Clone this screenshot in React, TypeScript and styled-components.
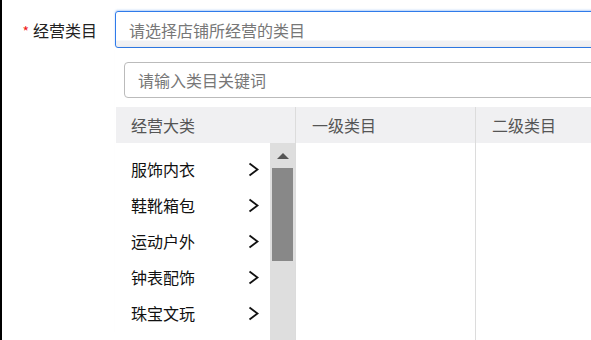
import React from "react";
import styled, { createGlobalStyle } from "styled-components";

const GlobalStyle = createGlobalStyle`
  html, body {
    margin: 0;
    padding: 0;
    background: #fff;
    overflow: hidden;
  }
  body {
    font-family: "Noto Sans CJK SC", "Noto Sans", "Liberation Sans", sans-serif;
  }
`;

const categories = ["服饰内衣", "鞋靴箱包", "运动户外", "钟表配饰", "珠宝文玩"];

const Page = styled.div`
  display: flex;
  align-items: flex-start;
  min-height: 340px;
  padding-top: 11px;
  box-sizing: border-box;
  border-left: 2px solid #000;
  overflow: hidden;
`;

const Label = styled.div`
  width: 113px;
  flex-shrink: 0;
  box-sizing: border-box;
  padding-right: 18px;
  height: 37px;
  display: flex;
  align-items: center;
  justify-content: flex-end;
  font-size: 16px;
  color: #222;
`;

const Required = styled.span`
  color: #f01818;
  font-size: 14px;
  margin-right: 4px;
  line-height: 1;
  position: relative;
  top: 1px;
`;

const Field = styled.div`
  width: 620px;
  flex-shrink: 0;
`;

const SelectBox = styled.div`
  height: 37px;
  box-sizing: border-box;
  border: 1px solid #2f7bea;
  border-radius: 3px;
  box-shadow: 0 -1px 2px rgba(47, 123, 234, 0.35);
  display: flex;
  align-items: center;
  padding-left: 13px;
  font-size: 16px;
  color: #777;
  background: linear-gradient(to bottom, #fff 0, #fff 28px, #f1f1f3 29px);
`;

const Panel = styled.div`
  position: relative;
  padding-top: 14px;
  background: #fff;
  box-shadow: 0 -3px 4px -3px rgba(0, 0, 0, 0.1);
`;

const SearchBox = styled.div`
  margin-left: 9px;
  height: 36px;
  box-sizing: border-box;
  border: 1px solid #bbb;
  border-radius: 4px;
  display: flex;
  align-items: center;
  padding-left: 13px;
  font-size: 16px;
  color: #777;
`;

const Table = styled.div`
  margin-top: 9px;
  margin-left: 1px;
`;

const Grid = styled.div`
  display: grid;
  grid-template-columns: 180px 180px 1fr;
`;

const HeadCell = styled.div<{ $first?: boolean }>`
  height: 36px;
  background: #f0f0f2;
  border-right: 1px solid #dcdcdc;
  display: flex;
  align-items: center;
  padding-left: ${(p) => (p.$first ? "15px" : "16px")};
  font-size: 16px;
  color: #555;
`;

const BodyCell = styled.div`
  height: 197px;
  border-right: 1px solid #dcdcdc;
  display: flex;
`;

const List = styled.div`
  flex: 1;
  padding-top: 8px;
`;

const Item = styled.div`
  height: 36px;
  display: flex;
  align-items: center;
  justify-content: space-between;
  padding: 0 11px 0 15px;
  font-size: 16px;
  color: #111;
`;

const ScrollTrack = styled.div`
  width: 25px;
  background: #dedede;
  display: flex;
  flex-direction: column;
  align-items: center;
`;

const UpArrow = styled.div`
  margin-top: 10px;
  width: 0;
  height: 0;
  border-left: 6px solid transparent;
  border-right: 6px solid transparent;
  border-bottom: 6px solid #555;
`;

const Thumb = styled.div`
  margin-top: 9px;
  width: 21px;
  height: 93px;
  background: #888;
`;

const Chevron = () => (
  <svg width="11" height="15" viewBox="0 0 11 15">
    <polyline points="1.5,1.5 9.5,7.5 1.5,13.5" fill="none" stroke="#111" strokeWidth="1.8" />
  </svg>
);

export default function App() {
  return (
    <>
      <GlobalStyle />
      <Page>
        <Label>
          <Required>*</Required>经营类目
        </Label>
        <Field>
          <SelectBox>请选择店铺所经营的类目</SelectBox>
          <Panel>
            <SearchBox>请输入类目关键词</SearchBox>
            <Table>
              <Grid>
                <HeadCell $first>经营大类</HeadCell>
                <HeadCell>一级类目</HeadCell>
                <HeadCell>二级类目</HeadCell>
              </Grid>
              <Grid>
                <BodyCell>
                  <List>
                    {categories.map((c) => (
                      <Item key={c}>
                        {c}
                        <Chevron />
                      </Item>
                    ))}
                  </List>
                  <ScrollTrack>
                    <UpArrow />
                    <Thumb />
                  </ScrollTrack>
                </BodyCell>
                <BodyCell />
                <BodyCell />
              </Grid>
            </Table>
          </Panel>
        </Field>
      </Page>
    </>
  );
}
